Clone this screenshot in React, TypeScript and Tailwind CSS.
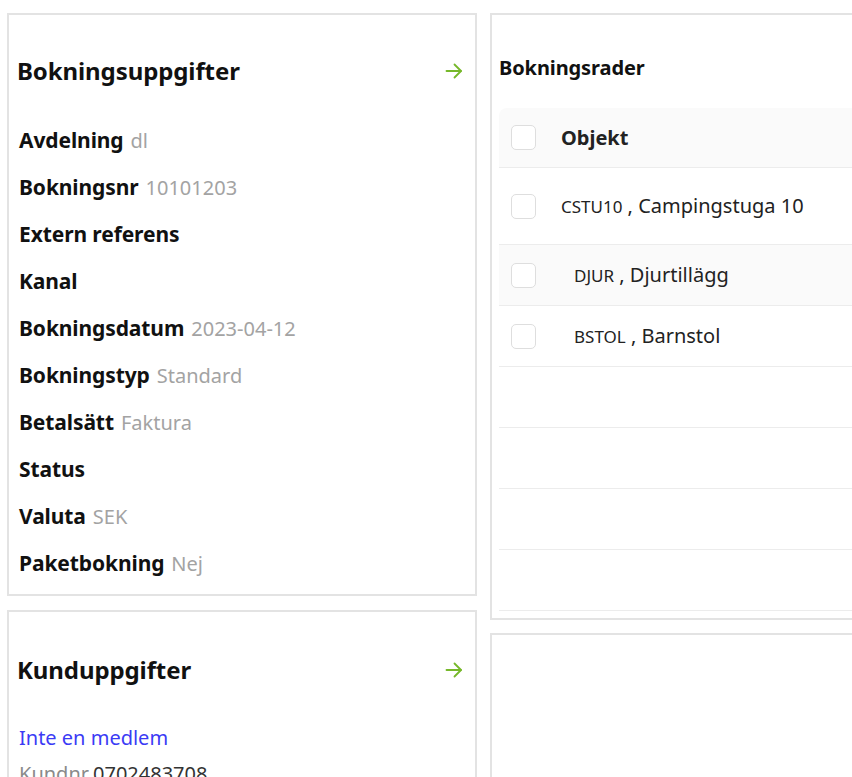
import React from 'react';

const font = { fontFamily: '"Noto Sans", "Open Sans", sans-serif' };

const details: { label: string; value?: string }[] = [
  { label: 'Avdelning', value: 'dl' },
  { label: 'Bokningsnr', value: '10101203' },
  { label: 'Extern referens' },
  { label: 'Kanal' },
  { label: 'Bokningsdatum', value: '2023-04-12' },
  { label: 'Bokningstyp', value: 'Standard' },
  { label: 'Betalsätt', value: 'Faktura' },
  { label: 'Status' },
  { label: 'Valuta', value: 'SEK' },
  { label: 'Paketbokning', value: 'Nej' },
];

const rows = [
  { code: 'CSTU10', name: 'Campingstuga 10', child: false },
  { code: 'DJUR', name: 'Djurtillägg', child: true },
  { code: 'BSTOL', name: 'Barnstol', child: true },
];

const Arrow = () => (
  <svg width="18" height="16" viewBox="0 0 18 16" fill="none" stroke="#76b82a" strokeWidth="1.8" strokeLinecap="round" strokeLinejoin="round">
    <path d="M1.5 8h14.5" />
    <path d="M9.5 1.5 16 8l-6.5 6.5" />
  </svg>
);

const Checkbox = () => (
  <span className="block w-[25px] h-[25px] rounded-[5px] border-[1.5px] border-[#dedede] bg-white shrink-0" />
);

export default function App() {
  return (
    <div className="w-[852px] h-[777px] overflow-hidden bg-white text-[#111]" style={font}>
      <div className="flex gap-[13px] pt-[13px] pl-[7px]">
        {/* Left column */}
        <div className="w-[470px] shrink-0 flex flex-col gap-[14px]">
          <section className="border-2 border-[#e3e3e3] h-[583px] pl-[8px] pr-[12px]">
            <div className="flex items-center justify-between h-[112px]">
              <h2 className="text-[24px] font-bold tracking-[-0.1px]">Bokningsuppgifter</h2>
              <Arrow />
            </div>
            <div className="flex flex-col pl-[2px] -mt-[10px]">
              {details.map((d) => (
                <div key={d.label} className="h-[47px] flex items-center leading-none">
                  <span className="text-[21px] font-bold tracking-[-0.1px]">{d.label}</span>
                  {d.value && <span className="ml-[7px] text-[20px] text-[#a3a3a3]">{d.value}</span>}
                </div>
              ))}
            </div>
          </section>

          <section className="border-2 border-[#e3e3e3] h-[200px] pl-[8px] pr-[12px]">
            <div className="flex items-center justify-between h-[116px]">
              <h2 className="text-[24px] font-bold tracking-[-0.1px]">Kunduppgifter</h2>
              <Arrow />
            </div>
            <div className="pl-[2px] -mt-[8px] flex flex-col">
              <div className="h-[36px] flex items-center text-[20px] text-[#3b3bf5]">Inte en medlem</div>
              <div className="h-[36px] flex items-center text-[20px]">
                <span className="text-[#8a8a8a]">Kundnr</span>
                <span className="ml-[4px] text-[#333]">0702483708</span>
              </div>
            </div>
          </section>
        </div>

        {/* Right column */}
        <div className="w-[500px] shrink-0 flex flex-col gap-[13px]">
          <section className="border-2 border-[#e3e3e3] border-r-0 h-[607px] pl-[7px]">
            <div className="h-[93px] flex items-center">
              <h3 className="text-[20px] font-bold tracking-[-0.1px] mt-[13px]">Bokningsrader</h3>
            </div>
            <div className="flex flex-col">
              <div className="h-[60px] flex items-center bg-[#fafafa] rounded-tl-[8px] border-b border-[#ececec] pl-[12px]">
                <Checkbox />
                <span className="ml-[25px] text-[20px] font-bold text-[#222]">Objekt</span>
              </div>
              {rows.map((r, i) => (
                <div
                  key={r.code}
                  className={`flex items-center border-b border-[#ececec] pl-[12px] ${i === 0 ? 'h-[77px]' : 'h-[61px]'} ${i === 1 ? 'bg-[#fafafa]' : ''}`}
                >
                  <Checkbox />
                  <span className={`${r.child ? 'ml-[38px]' : 'ml-[25px]'} text-[#222] whitespace-nowrap`}>
                    <span className="text-[17px]">{r.code}</span>
                    <span className="text-[20px]"> , {r.name}</span>
                  </span>
                </div>
              ))}
              {[0, 1, 2, 3].map((k) => (
                <div key={k} className="h-[61px] border-b border-[#ececec]" />
              ))}
            </div>
          </section>
          <section className="border-2 border-[#e3e3e3] border-r-0 h-[200px]" />
        </div>
      </div>
    </div>
  );
}
